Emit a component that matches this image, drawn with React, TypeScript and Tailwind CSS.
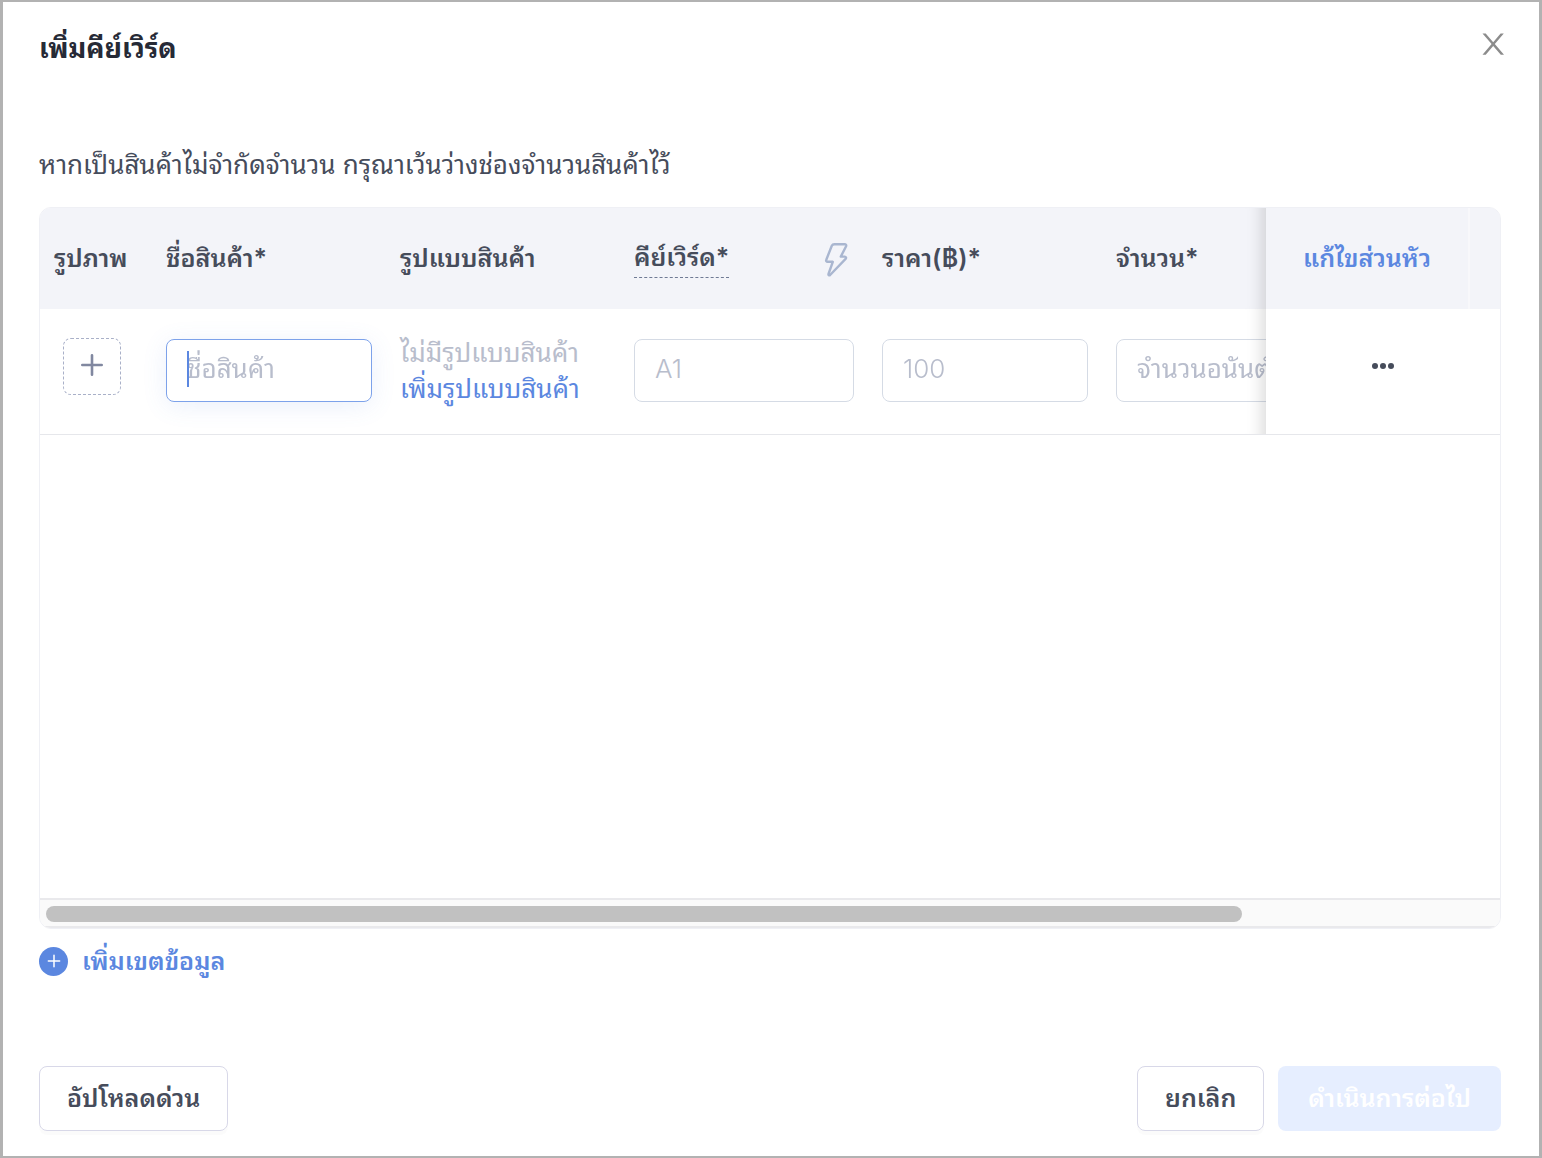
import clsx from "clsx";

type Column = {
  label: string;
  width: string;
  hint?: boolean;
};

const columns: Column[] = [
  { label: "รูปภาพ", width: "w-[112px]" },
  { label: "ชื่อสินค้า*", width: "w-[234px]" },
  { label: "รูปแบบสินค้า", width: "w-[234px]" },
  { label: "คีย์เวิร์ด*", width: "w-[248px]", hint: true },
  { label: "ราคา(฿)*", width: "w-[234px]" },
  { label: "จำนวน*", width: "w-auto" },
];

const CloseIcon = () => (
  <svg className="h-6 w-6" viewBox="0 0 24 24" fill="#8c8c8c" aria-hidden="true">
    <path d="M1.5 1.5h3.2L12.200 10.200l7.400-8.700h3.200L13.800 12l9.200 10.800h-3.200L12.200 13.900l-7.500 8.900H1.500L10.600 12z" />
  </svg>
);

const BoltIcon = () => (
  <svg
    className="h-9 w-7"
    viewBox="0 0 28 36"
    fill="none"
    stroke="#a9b6d0"
    strokeWidth="2.4"
    strokeLinejoin="round"
    strokeLinecap="round"
    aria-hidden="true"
  >
    <path d="M12.400 3.200h10.200c1.200 0 1.900.9 1.500 2l-5.300 10.400h3.900c1.300 0 1.800 1.300.9 2.200L8.100 34c-.9.800-1.900.1-1.600-1L10.800 20.800H5.600c-1.200 0-1.800-1-1.300-2.100L9.800 4.800c.5-1.100 1.400-1.600 2.600-1.600z" />
  </svg>
);

const PlusIcon = ({ className }: { className?: string }) => (
  <svg
    className={className}
    viewBox="0 0 24 24"
    fill="none"
    stroke="currentColor"
    strokeWidth="2.6"
    strokeLinecap="round"
    aria-hidden="true"
  >
    <path d="M12 2.300v19.400M2.300 12h19.400" />
  </svg>
);

// Fades out the columns that slide under the pinned one
const PinnedShadow = () => (
  <span className="pointer-events-none absolute inset-y-0 right-full w-[60px] shadow-[inset_-20px_0_16px_-16px_rgba(0,0,0,0.15)]" />
);

const TextField = ({
  label,
  placeholder,
  active,
  className,
}: {
  label: string;
  placeholder: string;
  active?: boolean;
  className?: string;
}) => (
  <div className="relative">
    <input
      type="text"
      aria-label={label}
      placeholder={placeholder}
      className={clsx(
        "block h-[63px] w-full rounded-lg border bg-white px-5 pb-1 text-[#464c5b] caret-transparent outline-none placeholder:text-[#b8bdcc]",
        active
          ? "border-[#7da2ea] shadow-[0_4px_24px_rgba(91,135,224,0.12)]"
          : "border-[#d5dbe5]",
        className
      )}
    />
    {active && (
      <span className="absolute top-3 left-[21px] h-9 w-0.5 bg-[#5b87e0]" />
    )}
  </div>
);

const ProductTable = () => (
  <div className="flex flex-1 flex-col overflow-hidden rounded-xl border border-[#eff0f5]">
    <div className="flex-1 overflow-hidden">
      <table className="w-[1768px] table-fixed border-separate border-spacing-0 text-left">
        <thead className="text-[25px]">
          <tr className="h-[101px] bg-[#f3f4f9]">
            {columns.map(({ label, width, hint }) => (
              <th
                key={label}
                className={clsx("px-3.5 font-semibold", width)}
              >
                {hint ? (
                  <div className="flex items-center justify-between">
                    <span className="border-b border-dashed border-[#6f7a94]">
                      {label}
                    </span>
                    <button
                      type="button"
                      aria-label="สร้างคีย์เวิร์ด"
                      className="mr-1"
                    >
                      <BoltIcon />
                    </button>
                  </div>
                ) : (
                  label
                )}
              </th>
            ))}
            <th className="sticky right-0 w-[234px] bg-[#f3f4f9] p-0">
              <PinnedShadow />
              <div className="mr-[30px] flex h-[101px] items-center justify-center border-r-2 border-[#f8f8fb]">
                <a href="#" className="font-semibold text-[#5b87e0]">
                  แก้ไขส่วนหัว
                </a>
              </div>
            </th>
          </tr>
        </thead>
        <tbody className="text-[26px] [&_td]:border-b [&_td]:border-[#e6e7eb]">
          <tr className="h-[126px]">
            <td className="px-[23px] pb-2.5">
              <button
                type="button"
                aria-label="เพิ่มรูปภาพ"
                className="flex h-[57px] w-[58px] items-center justify-center rounded-lg border border-dashed border-[#a9b0c8] pb-1 text-[#8188a0]"
              >
                <PlusIcon className="h-6 w-6" />
              </button>
            </td>
            <td className="px-3.5 pb-0.5">
              <TextField label="ชื่อสินค้า" placeholder="ชื่อสินค้า" active />
            </td>
            <td className="px-3.5 pb-0.5 leading-9">
              <p className="text-[#b8bdcc]">ไม่มีรูปแบบสินค้า</p>
              <a href="#" className="block text-[#5b87e0]">
                เพิ่มรูปแบบสินค้า
              </a>
            </td>
            <td className="px-3.5 pb-0.5">
              <TextField
                label="คีย์เวิร์ด"
                placeholder="A1"
                className="font-light"
              />
            </td>
            <td className="px-3.5 pb-0.5">
              <TextField
                label="ราคา"
                placeholder="100"
                className="font-light"
              />
            </td>
            <td className="px-3.5 pb-0.5">
              <TextField label="จำนวน" placeholder="จำนวนอนันต์" />
            </td>
            <td className="sticky right-0 bg-white pb-3">
              <PinnedShadow />
              <button
                type="button"
                aria-label="ตัวเลือกเพิ่มเติม"
                className="mx-auto flex gap-0.5"
              >
                <span className="h-1.5 w-1.5 rounded-full bg-[#464c5b]" />
                <span className="h-1.5 w-1.5 rounded-full bg-[#464c5b]" />
                <span className="h-1.5 w-1.5 rounded-full bg-[#464c5b]" />
              </button>
            </td>
          </tr>
        </tbody>
      </table>
    </div>
    <div className="border-y-2 border-[#e9e9ec] bg-[#fafafa] px-1.5 pt-1.5 pb-1">
      <div className="h-4 w-[82.6%] rounded-full bg-[#c1c1c1]" />
    </div>
  </div>
);

export default function App() {
  return (
    <div
      role="dialog"
      aria-labelledby="dialog-title"
      className="flex min-h-screen flex-col border-x-[3px] border-y-2 border-[#b2b2b2] bg-white pt-6 pr-[38px] pb-[25px] pl-9 font-['Inter','Noto_Sans_Thai_Looped','Sarabun','Loma','Garuda','Waree','Umpush',sans-serif] text-[#464c5b]"
    >
      <header className="flex items-start justify-between">
        <h1
          id="dialog-title"
          className="text-[27px] leading-[46px] font-bold text-[#262a36]"
        >
          เพิ่มคีย์เวิร์ด
        </h1>
        <button type="button" aria-label="ปิด" className="mt-1.5 -mr-1">
          <CloseIcon />
        </button>
      </header>

      <p className="mt-[74px] mb-6 text-[26px] leading-[37px]">
        หากเป็นสินค้าไม่จำกัดจำนวน กรุณาเว้นว่างช่องจำนวนสินค้าไว้
      </p>

      <ProductTable />

      <button
        type="button"
        className="mt-4 flex items-center gap-3.5 self-start text-[25px] leading-8 font-semibold text-[#5b87e0]"
      >
        <span className="flex h-[29px] w-[29px] items-center justify-center rounded-full bg-[#5b87e0] text-white">
          <PlusIcon className="h-3.5 w-3.5" />
        </span>
        เพิ่มเขตข้อมูล
      </button>

      <footer className="mt-[89px] flex gap-3.5 text-[25px] font-semibold">
        <button
          type="button"
          className="mr-auto h-[65px] rounded-lg border border-[#d8d8e8] px-[27px] shadow-[0_4px_0_rgba(0,0,0,0.016)]"
        >
          อัปโหลดด่วน
        </button>
        <button
          type="button"
          className="h-[65px] rounded-lg border border-[#d8d8e8] px-[27px] shadow-[0_4px_0_rgba(0,0,0,0.016)]"
        >
          ยกเลิก
        </button>
        <button
          type="button"
          disabled
          className="h-[65px] rounded-lg bg-[#e6eeff] px-[30px] text-white"
        >
          ดำเนินการต่อไป
        </button>
      </footer>
    </div>
  );
}
